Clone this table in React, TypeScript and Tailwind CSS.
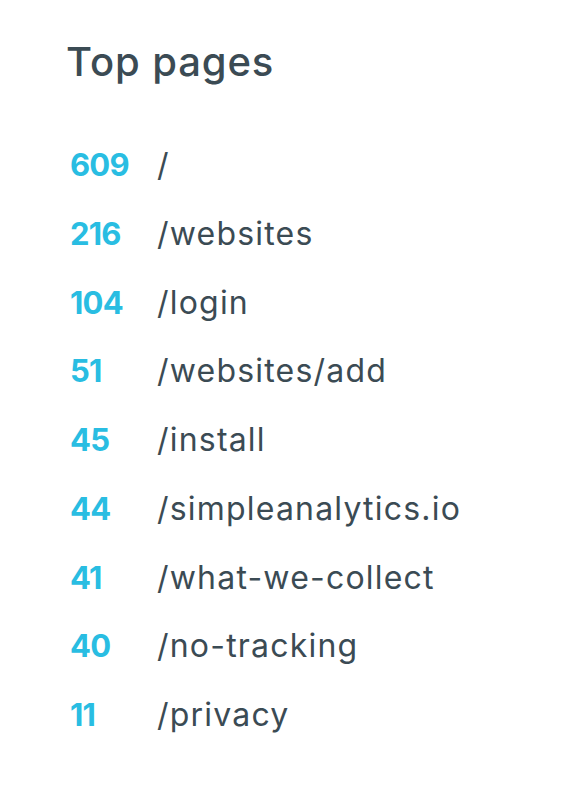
const PAGES: [number, string][] = [
  [609, "/"],
  [216, "/websites"],
  [104, "/login"],
  [51, "/websites/add"],
  [45, "/install"],
  [44, "/simpleanalytics.io"],
  [41, "/what-we-collect"],
  [40, "/no-tracking"],
  [11, "/privacy"],
];

export default function App() {
  return (
    <div
      className="min-h-[800px] w-[567px] bg-white pl-[66px] pt-[38px] text-[#3b4b54]"
      style={{ fontFamily: "Inter, 'Noto Sans', sans-serif" }}
    >
      <h1 className="text-[40px] font-medium leading-[48px] tracking-[0.9px]">Top pages</h1>
      <ul className="mt-[61px] flex flex-col">
        {PAGES.map(([count, path]) => (
          <li key={path} className="flex h-[68.75px] items-start">
            <span className="w-[91px] pl-[4px] text-[31px] font-bold leading-[36px] tracking-[-0.8px] text-[#29bde2]">
              {count}
            </span>
            <span className="text-[32px] leading-[36px] tracking-[1.2px]">{path}</span>
          </li>
        ))}
      </ul>
    </div>
  );
}
